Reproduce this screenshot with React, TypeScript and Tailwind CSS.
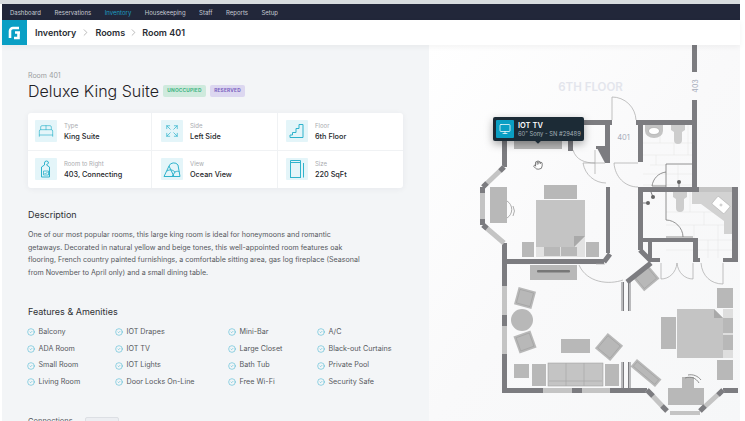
import { BedDouble, ChevronRight, CircleCheck, Expand, Hand, Monitor } from 'lucide-react';

const nav = ['Dashboard', 'Reservations', 'Inventory', 'Housekeeping', 'Staff', 'Reports', 'Setup'];

const StairsIcon = () => (
    <svg width="16" height="16" viewBox="0 0 16 16" fill="none" stroke="#2fb3cc" strokeWidth="1">
        <path d="M1 14.500h13V1.500h-4v4H7v4H3.500v2.500H1z" />
    </svg>
);

const HangerIcon = () => (
    <svg width="12" height="18" viewBox="0 0 12 18" fill="none" stroke="#2fb3cc" strokeWidth="1">
        <path d="M1.500 17V7l3-2V3a2 2 0 0 1 4 0c0 1-2 1-2 2l3 2v10z" />
        <path d="M3.500 11h5v4h-5zM4.500 13l1 1 2-2" strokeWidth="0.8" />
    </svg>
);

const ViewIcon = () => (
    <svg width="18" height="17" viewBox="0 0 18 17" fill="none" stroke="#2fb3cc" strokeWidth="1">
        <path d="M1 15.500 6 5a5 4.500 0 0 1 9-1l2 11.500z" />
        <path d="M4 10c3-2 6-1 8 1M12 11l-3 4.500M6 5l5 10.500M12 11c2-1 3-1 4.500 0" />
    </svg>
);

const SizeIcon = () => (
    <svg width="14" height="18" viewBox="0 0 14 18" fill="none" stroke="#2fb3cc" strokeWidth="1">
        <rect x="0.500" y="2.500" width="10" height="15" />
        <path d="M0.500 0.500h10M0.500 2.500V0.500M10.500 2.500V0.500M13.500 3v14.500" />
    </svg>
);

const specs = [
    { label: 'Type', value: 'King Suite', icon: <BedDouble size={16} strokeWidth={1} color="#2fb3cc" /> },
    { label: 'Side', value: 'Left Side', icon: <Expand size={14} strokeWidth={1.25} color="#2fb3cc" /> },
    { label: 'Floor', value: '6th Floor', icon: <StairsIcon /> },
    { label: 'Room to Right', value: '403, Connecting', icon: <HangerIcon /> },
    { label: 'View', value: 'Ocean View', icon: <ViewIcon /> },
    { label: 'Size', value: '220 SqFt', icon: <SizeIcon /> },
];

const features = [
    ['Balcony', 'ADA Room', 'Small Room', 'Living Room'],
    ['IOT Drapes', 'IOT TV', 'IOT Lights', 'Door Locks On-Line'],
    ['Mini-Bar', 'Large Closet', 'Bath Tub', 'Free Wi-Fi'],
    ['A/C', 'Black-out Curtains', 'Private Pool', 'Security Safe'],
];

const dark = '#7c7c80';
const light = '#c4c4c4';
const furn = '#b8b8b8';

// walls as [x, y, w, h] in screenshot coordinates
const darkWalls = [
    [584, 120, 28, 5], [636, 120, 61, 5], [692, 45, 5, 27], [692, 100, 5, 92],
    [638, 125, 5, 37], [638, 187, 61, 5], [732, 187, 6, 75], [638, 192, 5, 58],
    [643, 238, 55, 4], [648, 242, 4, 16], [693, 242, 5, 20], [650, 258, 10, 4],
    [693, 258, 7, 4], [723, 258, 15, 4], [502, 140, 5, 27], [568, 140, 5, 11],
    [605, 125, 5, 38], [606, 187, 4, 66], [502, 243, 5, 43], [502, 315, 5, 11],
    [502, 354, 5, 39], [507, 259, 97, 5], [502, 388, 41, 5], [572, 388, 10, 5],
    [610, 388, 37, 5], [723, 388, 15, 5],
];

const lightWalls = [
    [502, 286, 5, 29], [502, 326, 5, 28], [543, 388, 29, 5], [582, 388, 28, 5],
    [699, 187, 33, 5], [670, 411, 30, 4],
];

const furniture = [
    [514, 140, 48, 9], [544, 185, 33, 14], [490, 187, 17, 36], [522, 242, 12, 15],
    [586, 242, 13, 15], [544, 247, 16, 9], [561, 247, 16, 9], [530, 265, 47, 15],
    [561, 339, 29, 14], [514, 364, 15, 14], [532, 364, 14, 22], [605, 364, 14, 22],
    [717, 288, 16, 20], [717, 360, 16, 20], [661, 317, 15, 32], [668, 388, 36, 17],
    [682, 377, 12, 11],
];

// rotated seats: [cx, cy, w, h, angle]
const seats = [
    [646, 278, 20, 18, -40], [525, 298, 18, 18, 15], [525, 342, 18, 18, -20], [609, 347, 20, 20, 40],
    [646, 373, 32, 10, 40],
];

const FloorPlan = () => (
    <svg className="block w-full h-full" viewBox="429 45 311 376">
        {/* bathroom tiles */}
        <g stroke="#e8e8e8" strokeWidth="0.6" fill="none">
            <path d="M643 143h49M643 155h49M643 174h49M650 165h16M643 185h49M660 125v18M674 143v12M688 125v30M656 155v10M678 165v22" />
            <path d="M666 212h66M666 225h66M666 240h66M666 250h66M690 192v20M704 212v13M718 225v33M694 225v13M708 240v18" />
        </g>
        {/* bath fixtures */}
        <path d="M645 125h18v6a9 7 0 0 1-18 0z" fill={light} />
        <ellipse cx="654" cy="131" rx="5.500" ry="3.500" fill="#fff" stroke="#999" strokeWidth="0.5" />
        <path d="M671 125h14v5l-3 2v8a4 4 0 0 1-8 0v-8l-3-2z" fill="#cdcdcd" />
        <path d="M673 192h14v5l-3 2v9a4 4 0 0 1-8 0v-9l-3-2z" fill="#cdcdcd" />
        <path d="M692 192h41v42h-9v-13l-23-17h-9z" fill="#d2d2d2" />
        <g transform="rotate(40 721 205)">
            <rect x="713" y="200" width="16" height="10" rx="1" fill="#fff" stroke="#aaa" strokeWidth="0.5" />
            <circle cx="721" cy="205" r="1" fill="none" stroke="#999" strokeWidth="0.5" />
        </g>

        {/* upper bed */}
        <rect x="536" y="200" width="49" height="57" fill="#e2e2e2" />
        <path d="M536 200h49v36l-11 11h-38z" fill="#c4c4c4" />
        <path d="M585 236l-11 11v-11z" fill="#a9a9a9" />
        {/* lower bed */}
        <rect x="723" y="309" width="10" height="49" fill="#dedede" />
        <path d="M677 309h37l9 9v40h-46z" fill="#c4c4c4" />
        <path d="M714 309v9h9z" fill="#a9a9a9" />
        <rect x="723" y="318" width="10" height="15" fill={furn} />
        <rect x="723" y="335" width="10" height="15" fill={furn} />
        <circle cx="522" cy="320" r="11" fill={furn} />

        {furniture.map(([x, y, w, h], i) => <rect key={i} x={x} y={y} width={w} height={h} fill={furn} />)}
        {seats.map(([cx, cy, w, h, a], i) => (
            <g key={i} transform={`rotate(${a} ${cx} ${cy})`}>
                <rect x={cx - w / 2} y={cy - h / 2} width={w} height={h} fill={furn} />
                <rect x={cx - w / 2 + 2} y={cy - h / 2 + 2} width={w - 4} height={h - 4} fill="none" stroke="#999" strokeWidth="0.5" />
            </g>
        ))}
        <rect x="537" y="270" width="33" height="2.500" rx="1" fill="#777" />
        {/* sofa */}
        <rect x="548" y="363" width="55" height="23" fill={light} stroke="#999" strokeWidth="0.5" />
        <path d="M566 363v23M584 363v23M549 381h53" stroke="#a5a5a5" strokeWidth="0.6" fill="none" />

        {/* closet block */}
        <path d="M596 146h9v17z" fill={dark} />
        <rect x="596" y="146" width="9" height="3" fill={dark} />

        {darkWalls.map(([x, y, w, h], i) => <rect key={i} x={x} y={y} width={w} height={h} fill={dark} />)}
        {lightWalls.map(([x, y, w, h], i) => <rect key={i} x={x} y={y} width={w} height={h} fill={light} />)}

        {/* angled walls */}
        <g fill="none" strokeLinecap="butt">
            <path d="M504 167 483 187" stroke={light} strokeWidth="5" />
            <path d="M482.500 187v38" stroke={light} strokeWidth="5" />
            <path d="M483 225l21 18" stroke={light} strokeWidth="5" />
            <path d="M504 167l-4 4M483 187l4-4M482.500 187v6M482.500 225v-6M483 225l4 3.500" stroke={dark} strokeWidth="5" />
            <path d="M604 262l6-8M640 250l11 11M651 263l-24 19" stroke={dark} strokeWidth="5" />
            <path d="M647 390l20 21M723 390l-23 21" stroke={light} strokeWidth="5" />
            <path d="M647 390l6 6M667 411l-5-5M723 390l-5 5M700 411l5-5" stroke={dark} strokeWidth="5" />
            <path d="M623.500 282v29M628.500 282v29M623.500 362v26M628.500 362v26M622 282v29M630 282v29M622 362v26M630 362v26" stroke={dark} strokeWidth="1" />
        </g>

        {/* doors and thin walls */}
        <g fill="none" stroke="#a8a8a8" strokeWidth="0.7">
            <path d="M612 120V97A24 24 0 0 1 636 120" />
            <path d="M573 150c3 10 12 13 22 13M583 163h22M595 150v24" />
            <path d="M583 163c2 12 12 20 23 20M614 163h24M614 163c1 14 11 24 24 24" />
            <path d="M579 265c8 18 30 20 44 15M605 264h-9" />
            <path d="M661 263v16c8 0 15-6 16-16 1 10 8 16 16 16v-16M723 263v21c-12 0-21-8-22-21" />
        </g>
        <g fill="none" stroke="#777" strokeWidth="0.8">
            <path d="M692 164h-26v8c-8 1-13 7-14 14h14M666 172v15" />
            <path d="M666 192v28c9 0 17 8 17 17M666 237h27" />
            <path d="M507 201a10 10 0 0 1 0 17M513 206a10 10 0 0 1 0 10" stroke="#999" />
            <path d="M685 378c6-2 11 0 14 5M688 375c5-1 10 1 13 5" />
        </g>
        <path d="M679 182v5M653 197l-2-5M648 203h-5" stroke={dark} strokeWidth="1" />
        <circle cx="679" cy="182" r="2" fill="#666" />
        <circle cx="653" cy="197" r="2" fill="#666" />
        <circle cx="648" cy="203" r="2" fill="#666" />

        <text x="590.500" y="91" textAnchor="middle" fontFamily="Inter, sans-serif" fontWeight="600" fontSize="11.500" fill="#e3e5ec">6TH FLOOR</text>
        <text x="623.500" y="140" textAnchor="middle" fontFamily="Inter, sans-serif" fontSize="7.500" fill="#a7adbb">401</text>
        <text transform="translate(697.500 86) rotate(-90)" textAnchor="middle" fontFamily="Inter, sans-serif" fontSize="7" fill="#a7adbb">403</text>
    </svg>
);

export default function App() {
    return (
        <div className="w-[745px] h-[421px] overflow-hidden bg-white font-['Inter',sans-serif]">
            <div className="h-[4px] w-[740px] bg-[#d8dcdf]" />
            <div className="ml-[2px] w-[738px] h-[417px] flex flex-col">
                <nav className="h-[16px] shrink-0 bg-[#22273a] flex items-center gap-[13.500px] pl-[8px] text-[6px] text-[#c6cad3]">
                    {nav.map((item) => (
                        <span key={item} className={item === 'Inventory' ? 'text-[#1e9ec0]' : ''}>{item}</span>
                    ))}
                </nav>
                <header className="relative z-10 h-[25px] shrink-0 bg-white flex items-center shadow-[0_2px_6px_rgba(0,0,0,0.05)]">
                    <div className="w-[25px] h-[25px] bg-[#0a9fc4] flex items-center justify-center text-white">
                        <svg width="13" height="14" viewBox="0 0 13 14" fill="none" stroke="#fff" strokeWidth="2.600">
                            <path d="M11 2H5a3 3 0 0 0-3 3v7M12 6.500H7M10.500 6.500V12H6" />
                        </svg>
                    </div>
                    <div className="ml-[8px] flex items-center text-[9px] font-semibold text-[#2a2d33]">
                        <span>Inventory</span>
                        <ChevronRight size={11} strokeWidth={1.25} color="#8a8a8a" className="mx-[4px]" />
                        <span>Rooms</span>
                        <ChevronRight size={11} strokeWidth={1.25} color="#8a8a8a" className="mx-[3px]" />
                        <span>Room 401</span>
                    </div>
                </header>
                <div className="flex-1 flex min-h-0">
                    <main className="w-[427px] shrink-0 bg-[#f3f5f7] pl-[26px] pt-[26px] overflow-hidden">
                        <div className="text-[7px] leading-[9px] text-[#9b9da1]">Room 401</div>
                        <div className="flex items-center h-[22px]">
                            <h1 className="text-[16px] leading-[22px] font-light text-[#1f2125] w-[135px] whitespace-nowrap">Deluxe King Suite</h1>
                            <span className="h-[12px] w-[43px] rounded-[2px] bg-[#cfeadd] text-[#3fb483] text-[4.800px] font-bold tracking-[0.2px] flex items-center justify-center">UNOCCUPIED</span>
                            <span className="ml-[4px] h-[12px] w-[35px] rounded-[2px] bg-[#dcd7f0] text-[#7a5fbf] text-[4.800px] font-bold tracking-[0.2px] flex items-center justify-center">RESERVED</span>
                        </div>
                        <section className="mt-[11px] w-[375px] h-[75px] bg-white rounded-[3px] shadow-[0_1px_6px_rgba(30,40,60,0.06)] grid grid-cols-[124px_126px_125px] grid-rows-2">
                            {specs.map((s, i) => (
                                <div key={s.label} className={`flex items-center gap-[7px] ${i % 3 === 1 ? 'pl-[9px]' : i % 3 === 0 ? 'pl-[7px]' : 'pl-[8px]'} ${i < 3 ? 'border-b border-[#f0f2f4]' : ''} ${i % 3 !== 2 ? 'border-r border-[#f0f2f4]' : ''}`}>
                                    <div className="w-[22px] h-[22px] rounded-[1px] bg-[#e4f5f9] flex items-center justify-center">{s.icon}</div>
                                    <div>
                                        <div className="text-[6px] leading-[9px] text-[#a9abaf]">{s.label}</div>
                                        <div className="text-[7.300px] leading-[11px] mt-[1px] font-medium text-[#24262a] whitespace-nowrap">{s.value}</div>
                                    </div>
                                </div>
                            ))}
                        </section>
                        <h2 className="mt-[20px] text-[9px] leading-[14px] text-[#2e3034]">Description</h2>
                        <p className="mt-[7px] w-[336px] text-[7.100px] leading-[12.500px] text-[#55585d]">
                            One of our most popular rooms, this large king room is ideal for honeymoons and romantic getaways. Decorated in natural yellow and beige tones, this well-appointed room features oak flooring, French country painted furnishings, a comfortable sitting area, gas log fireplace (Seasonal from November to April only) and a small dining table.
                        </p>
                        <h2 className="mt-[26px] text-[9px] leading-[14px] text-[#2e3034]">Features &amp; Amenities</h2>
                        <div className="mt-[5px] flex -ml-[1px]">
                            {features.map((col, i) => (
                                <ul key={i} className={['w-[88px]', 'w-[113px]', 'w-[89px]', 'w-[90px]'][i]}>
                                    {col.map((f) => (
                                        <li key={f} className="h-[16.700px] flex items-center gap-[3.500px] text-[7.200px] text-[#55585d] whitespace-nowrap">
                                            <CircleCheck size={8} strokeWidth={1.6} color="#3fb4cf" className="shrink-0" />
                                            {f}
                                        </li>
                                    ))}
                                </ul>
                            ))}
                        </div>
                        <div className="mt-[26px] flex items-start text-[7.500px] leading-[10px] text-[#55585d]">
                            <span className="w-[57px]">Connections</span>
                            <span className="h-[16px] w-[34px] rounded-[2px] border border-[#dcdfe4] bg-[#eceef2]" />
                        </div>
                    </main>
                    <div className="relative flex-1 bg-gradient-to-br from-white via-[#f9f9fa] to-[#f6f7f8]">
                        <FloorPlan />
                        <div className="absolute left-[64px] top-[72px] w-[91px] h-[24px] rounded-[2px] bg-[#1c2b36] shadow-[0_3px_8px_rgba(0,0,0,0.35)] flex items-center pl-[3px] gap-[4px]">
                            <div className="w-[18px] h-[18px] bg-[#0a9fc4] rounded-[1px] flex items-center justify-center">
                                <Monitor size={12} strokeWidth={1.5} color="#fff" />
                            </div>
                            <div className="whitespace-nowrap">
                                <div className="text-[7.500px] leading-[9px] font-semibold text-white">IOT TV</div>
                                <div className="text-[5.800px] leading-[8px] text-[#a4b0b6]">60" Sony - SN #29489</div>
                            </div>
                            <div className="absolute left-[43px] -bottom-[2px] w-[4px] h-[4px] rotate-45 bg-[#1c2b36]" />
                        </div>
                        <Hand size={10} strokeWidth={1.5} color="#333" fill="#fff" className="absolute left-[104px] top-[115px]" />
                    </div>
                </div>
            </div>
        </div>
    );
}
